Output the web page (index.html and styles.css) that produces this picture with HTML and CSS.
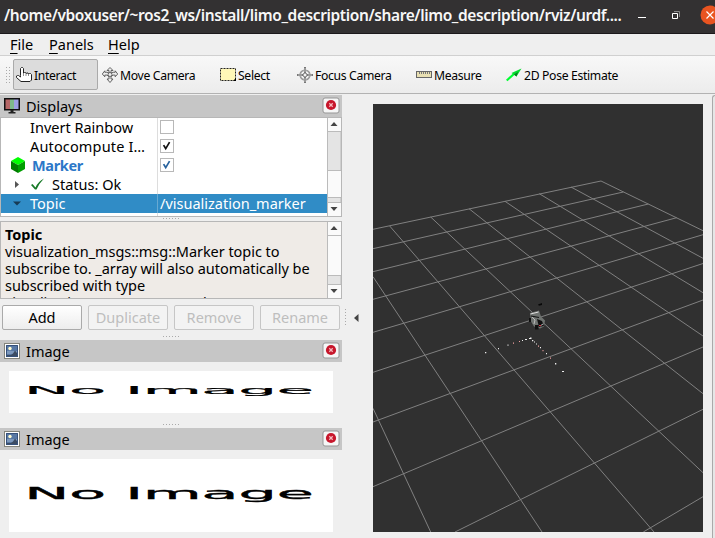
FILE: index.html
```
<!DOCTYPE html>
<html lang="en">
<head>
<meta charset="utf-8">
<title>RViz</title>
<link rel="stylesheet" href="styles.css">
</head>
<body>
<svg class="defs" width="0" height="0">
  <symbol id="close" viewBox="0 0 18 17"><rect x="1" y="1" width="16" height="15" rx="2" fill="#f6f6f6" stroke="#979797"/><circle cx="9" cy="8" r="5.1" fill="#c7162b"/><path d="M7.3 6.3l3.4 3.4M10.7 6.3L7.3 9.7" stroke="#f5b8bd" stroke-width="1.3"/></symbol>
  <symbol id="picture" viewBox="0 0 16 16"><rect x=".5" y=".5" width="15" height="15" fill="#fff" stroke="#84847c"/><rect x="2" y="2" width="12" height="12" fill="#5878a4"/><path d="M2 8h12v3H2z" fill="#7c98bd"/><circle cx="6" cy="5.500" r="1.700" fill="#fffbd0"/><path d="M2 12h5l2-1.500 2-3 3 4V14H2z" fill="#3c4c63"/><path d="M2.500 2.500h11v11h-11z" fill="none" stroke="#36517b"/></symbol>
  <symbol id="move" viewBox="0 0 16 16"><g fill="#eee" stroke="#555" stroke-width=".9"><path d="M8 .5l3 3H9v2.7l2-1 2.2.1V3.8L15.7 7l-2.5 2.8V8.1H11L9 9.8V12h2l-3 3.5L5 12h2V9.8L5 8.1H2.8v1.7L.3 7l2.5-3.2v1.5L5 5.2l2 1V3.500H5z"/><circle cx="8" cy="7.500" r="2"/></g></symbol>
  <symbol id="focus" viewBox="0 0 16 16"><g fill="none" stroke="#777"><circle cx="8" cy="8" r="4.800" stroke-width="1.600"/><circle cx="8" cy="8" r="4.800" stroke="#ddd" stroke-width=".5"/><circle cx="8" cy="8" r="2"/><path d="M8 0v6M8 10v6M0 8h6M10 8h6" stroke-width="2"/><path d="M8 1v4M8 11v4M1 8h4M11 8h4" stroke="#ddd" stroke-width=".7"/></g></symbol>
</svg>

<header class="titlebar">
  <span class="title">/home/vboxuser/~ros2_ws/install/limo_description/share/limo_description/rviz/urdf....</span>
  <svg class="controls" width="80" height="33" viewBox="0 0 80 33"><path d="M3 17.500h8" stroke="#fff"/><path d="M37.500 13.500h5v5h-5z" fill="none" stroke="#fff"/><path d="M39 11.500h5.500V17" fill="none" stroke="#888"/><circle cx="75" cy="15" r="9.500" fill="#e95420"/><path d="M71.500 11.500l7 7M78.500 11.500l-7 7" stroke="#fff" stroke-width="1.200"/></svg>
</header>

<nav class="menubar">
  <span class="file"><u>F</u>ile</span><span class="panels"><u>P</u>anels</span><span class="help"><u>H</u>elp</span>
</nav>

<div class="toolbar">
  <i class="grip"></i>
  <div class="tool interact active"><svg width="18" height="16" viewBox="0 0 18 16"><path d="M5.500 8.500V1.500l1-1h1l1 1V6l1-.5h1l.5 1 1-.5h1l.5 1 1-.5h1l1 1V13l-1.500 1.500h-9L1.500 10.500V9l1-.5h1l2 1.500z" fill="#fff" stroke="#222"/><path d="M8.500 6v3M11 6.500V9M13.500 7v2" stroke="#777" stroke-width=".8"/></svg><span>Interact</span></div>
  <div class="tool move"><svg width="16" height="16"><use href="#move"/></svg><span>Move Camera</span></div>
  <div class="tool select"><svg width="17" height="14" viewBox="0 0 17 14"><rect x=".5" y=".5" width="15" height="12" fill="#fff8b8" stroke="#222" stroke-dasharray="2 1"/><path d="M16 10v3h-3z" fill="#000"/></svg><span>Select</span></div>
  <div class="tool focus"><svg width="16" height="16"><use href="#focus"/></svg><span>Focus Camera</span></div>
  <div class="tool measure"><svg width="16" height="7" viewBox="0 0 16 7"><rect x=".5" y=".5" width="15" height="6" fill="#e8dfb2" stroke="#666"/><path d="M3.500 1v2M5.500 1v2M7.500 1v2M9.500 1v2M11.500 1v2M13.500 1v2" stroke="#777"/></svg><span>Measure</span></div>
  <div class="tool pose"><svg width="16" height="14" viewBox="0 0 16 14"><path d="M.7 12.500L8 6" stroke="#0f3" stroke-width="2.200"/><path d="M15.500.5L5.500 5l5 3.500z" fill="#00dc2c"/><path d="M8 6.500l2.500 2L12 4z" fill="#087b20"/></svg><span>2D Pose Estimate</span></div>
</div>

<main class="workspace">
  <aside class="dock">
    <div class="head"><svg width="16" height="16" viewBox="0 0 16 16"><rect x=".5" y=".5" width="15" height="11.500" fill="#111" stroke="#111"/><path d="M1.500 1.500h4.500v9.500H1.500z" fill="#b56666"/><path d="M6 1.500h4v9.500H6z" fill="#7eb98c"/><path d="M10 1.500h4.500v9.500H10z" fill="#9d9fe4"/><path d="M6.500 12h3v2h2v1.500h-7V14h2z" fill="#222"/></svg><span>Displays</span><svg class="x" width="18" height="17"><use href="#close"/></svg></div>
    <div class="box tree">
      <div class="rows">
        <div class="row"><b class="name">Invert Rainbow</b><b class="val"><i class="check"></i></b></div>
        <div class="row"><b class="name auto">Autocompute I…</b><b class="val"><svg class="check" width="14" height="14" viewBox="0 0 14 14"><path d="M3 6l2.500 4L10 2.500" fill="none" stroke="#111" stroke-width="2"/></svg></b></div>
        <div class="row marker"><svg class="cube" width="14" height="16" viewBox="0 0 14 16"><path d="M7 0l7 4-7 4-7-4z" fill="#0f0"/><path d="M0 4l7 4v8l-7-4z" fill="#007c00"/><path d="M14 4L7 8v8l7-4z" fill="#009e00"/></svg><b class="name">Marker</b><b class="val"><svg class="check" width="14" height="14" viewBox="0 0 14 14"><path d="M3 6l2.500 4L10 2.500" fill="none" stroke="#27629d" stroke-width="2"/></svg></b></div>
        <div class="row status"><svg class="lead" width="46" height="19" viewBox="0 0 46 19"><path d="M14 6l4 3.500-4 3.500z" fill="#555"/><path d="M30 10l1.500-1 3 3.500Q37 6.500 43 3.500q-5 5-7.500 11h-1.500z" fill="#187a28"/></svg><b class="name">Status: Ok</b><b class="val"></b></div>
        <div class="row chosen"><svg class="lead" width="29" height="19" viewBox="0 0 29 19"><path d="M12 7.500h8l-4 4z" fill="#173b55"/></svg><b class="name">Topic</b><b class="val">/visualization_marker</b></div>
        <div class="row last"><b class="name"></b><b class="val"></b></div>
      </div>
      <svg class="scroll" width="14" height="98" viewBox="0 0 14 98"><path d="M0 0h14v98H0z" fill="#fafafa"/><path d="M0 13.500h14v39H0z" fill="#e4e4e4" stroke="#bbb"/><path d="M0 79.500h14v5H0z" fill="#e4e4e4" stroke="#bbb"/><path d="M.5 0v98" stroke="#bbb"/><path d="M3.500 8h7L7 4zM3.500 89h7L7 93z" fill="#444"/></svg>
    </div>
    <div class="dots d1"></div>
    <div class="box desc">
      <div class="copy"><strong>Topic</strong><p class="l1">visualization_msgs::msg::Marker topic to</p><p class="l2">subscribe to. _array will also automatically be</p><p>subscribed with type</p><p>visualization_msgs::msg::Marker</p></div>
      <svg class="scroll" width="14" height="76" viewBox="0 0 14 76"><path d="M0 0h14v76H0z" fill="#fafafa"/><path d="M0 13.500h14M0 62.500h14" stroke="#bbb"/><path d="M0 53.500h14v9H0z" fill="#e4e4e4" stroke="#bbb"/><path d="M.5 0v76" stroke="#bbb"/><path d="M3.500 8h7L7 4zM3.500 67h7L7 71z" fill="#444"/></svg>
    </div>
    <div class="buttons"><button>Add</button><button disabled>Duplicate</button><button disabled>Remove</button><button disabled>Rename</button></div>
    <div class="dots d2"></div>
    <div class="head"><svg width="16" height="16"><use href="#picture"/></svg><span>Image</span><svg class="x" width="18" height="17"><use href="#close"/></svg></div>
    <svg class="image" width="324" height="42"><text class="none" transform="translate(15.200 23.200) scale(6.020 1.040)">No Image</text></svg>
    <div class="dots d3"></div>
    <div class="head"><svg width="16" height="16"><use href="#picture"/></svg><span>Image</span><svg class="x" width="18" height="17"><use href="#close"/></svg></div>
    <svg class="image" width="324" height="73"><text class="none" transform="translate(15.200 39.700) scale(6.020 1.620)">No Image</text></svg>
  </aside>

  <div class="collapse"><i class="vdots"></i><svg width="5" height="8" viewBox="0 0 5 8"><path d="M4.500 0v8L0 4z" fill="#444"/></svg></div>

  <svg class="view" width="330" height="428" viewBox="0 0 330 428">
    <g fill="none" stroke="#808080" stroke-width="1">
      <path d="M0 125.300L228 77M0 144.700L250.300 88M0 167.700L275.300 100M0 195.300L303.700 113.700M0 228.300L330 130.700M0 268.300L330 159.500M0 318L330 196M0 382.700L330 243M82 428L330 305.300M270.300 428L330 392.700"/>
      <path d="M228 77L330 126.700M198 83L330 154.300M166.300 89.700L330 188.700M132 97.300L330 232M96 104.700L330 289.700M57.700 113L330 368.700M16.700 122L281 428M0 172.700L169 428M0 304.300L57.700 428"/>
    </g>
    <g class="robot">
      <path d="M165 200.500l4-1.500v2l-3 .8z" fill="#080808"/>
      <path d="M157 209l9-2.500 2 6 4 4-1 6-4 2-6-2-3-5z" fill="#6f7370"/>
      <path d="M157.500 210l8-2" stroke="#ddd"/><path d="M158 212l8 1.500" stroke="#111" stroke-width="1.200"/>
      <path d="M156 214h2v4h-2zM162 221h3.500v4.500H162zM164 215l5 2 2 5-5 1z" fill="#101010"/>
      <path d="M159 213l3 3-1 4M167 222l3-2" fill="none" stroke="#bbb"/>
      <path d="M166 221h2v1h-2z" fill="#d34"/>
    </g>
    <g fill="#eee"><path d="M112 248h1.300v1.300H112zM125 244h1v1.300h-1zM134.500 240.500h1v1.300h-1zM149 236h1v1h-1zM152 235h2v1h-2zM156 234h2v1h-2zM157 233.500h1.500v1.500H157zM159 236h1.300v1.300H159zM161 237.500h1v1h-1zM163 239.500h1v1h-1zM167 243h1v1.300h-1zM173 249h1v1.300h-1zM182 259h1.300v1.500H182zM189 267h2v1h-2z"/></g>
    <path d="M140 238.500h1v1.300h-1zM146 237h1v1h-1zM165 241.500h1v1.300h-1zM169.500 246h1v1.300h-1zM177 253.500h1v1.300h-1z" fill="#f0a0a0"/>
  </svg>
  <div class="edge"></div>
</main>
</body>
</html>
```
FILE: styles.css
```
* { box-sizing: border-box; }
body { margin: 0; width: 715px; height: 538px; overflow: hidden; background: #efefef; color: #000; font: 14.500px/19px "Noto Sans", sans-serif; }
svg { display: block; flex: none; }
.defs { position: absolute; }
span, strong, p, b { white-space: nowrap; }
b { font-weight: 400; }
.titlebar { height: 34px; display: flex; background: #333132; border-bottom: 1px solid #1c191b; color: #f7f7f7; overflow: hidden; }
.title { width: 635px; flex: none; padding-left: 4px; font-size: 15.500px; line-height: 31px; font-weight: 600; letter-spacing: -.39px; }
.menubar { height: 22px; display: flex; border-bottom: 1px solid #d0d0d0; line-height: 21px; }
.menubar u { text-underline-offset: 3px; text-decoration-thickness: 1px; }
.file { width: 39px; margin-left: 10px; }
.panels { width: 59px; }
.toolbar { height: 38px; display: flex; align-items: center; background: linear-gradient(#f8f8f8, #ececec); border-bottom: 1px solid #b2b2b2; font-size: 12.200px; letter-spacing: -.33px; }
.grip { width: 5px; height: 17px; margin: 0 3px 0 5px; background: radial-gradient(circle, #aaa .7px, transparent 1px) 0 0 / 3px 3px; }
.tool { height: 31px; display: flex; align-items: center; gap: 2px; flex: none; }
.tool span { padding-top: 1px; }
.interact { width: 85px; border: 1px solid #aaa; border-radius: 2px; background: #dcdcdc; padding-left: 1px; gap: 1px; }
.move { width: 114px; margin-left: 4px; }
.select { width: 80px; margin-left: 4px; gap: 1px; }
.focus { width: 115px; margin-left: -3px; }
.measure { width: 87px; margin-left: 4px; }
.pose { margin-left: 3px; }
.workspace { height: 444px; display: flex; padding-top: 1px; }
.dock { width: 342px; flex: none; }
.head { height: 22px; display: flex; align-items: center; background: #c6c6c6; padding-left: 4px; gap: 6px; line-height: 22px; }
.x { margin: 0 2px 2px auto; }
.box { display: flex; border: 1px solid #b7b7b7; background: #fff; overflow: hidden; }
.tree { height: 100px; }
.rows { flex: 1; }
.row { height: 19px; display: flex; overflow: hidden; }
.name { width: 157px; flex: none; padding-left: 29px; border-right: 1px solid #ddd; }
.auto { letter-spacing: .15px; }
.val { flex: 1; padding: 2px 0 0 2px; }
.check { display: block; width: 14px; height: 14px; border: 1px solid #b8b8b8; background: #fff; }
.cube { margin: 1px 0 0 10px; }
.marker .name { width: 133px; padding-left: 7px; color: #2c78c8; font-weight: 700; letter-spacing: -.35px; }
.status .name { width: 111px; padding-left: 5px; }
.chosen { background: #308cc6; color: #fff; }
.chosen .name { width: 128px; padding-left: 0; border-color: #68a9d2; }
.chosen .val { padding-top: 0; }
.dots { height: 1px; width: 17px; margin-left: 163px; background: repeating-linear-gradient(90deg, #aaa 0 1px, transparent 1px 3px); }
.d1 { margin-top: 1px; margin-bottom: 2px; }
.desc { height: 78px; background: #efebe7; }
.copy { flex: 1; height: 76px; overflow: hidden; padding: 4px 0 0 4px; line-height: 17px; letter-spacing: -.05px; }
.copy p { margin: 0; }
.copy strong { display: block; }
.buttons { display: flex; gap: 6px; padding: 6px 2px 0; }
button { width: 80px; height: 25px; padding: 0; border: 1px solid #aaa; border-radius: 2px; background: linear-gradient(#fff, #ededed); color: #000; font: inherit; }
button:disabled { border-color: #c6c6c6; color: #bebebe; background: #f3f3f3; }
.d2 { margin-top: 6px; margin-bottom: 3px; }
.image { margin: 9px 0 0 9px; background: #fff; }
.none { font: 10px "DejaVu Sans", sans-serif; fill: #000; stroke: #000; stroke-width: .2px; }
.d3 { margin-top: 11px; margin-bottom: 3px; }
.collapse { width: 31px; flex: none; display: flex; align-items: center; padding: 2px 0 0 3px; gap: 8px; }
.vdots { width: 1px; height: 17px; background: repeating-linear-gradient(#aaa 0 1px, transparent 1px 3px); }
.view { margin-top: 9px; background: #303030; }
.edge { flex: 1; margin-left: 9px; border: 1px solid #aaa; border-width: 1px 0 0 1px; border-top-left-radius: 3px; background: #e6e6e6; }
```
